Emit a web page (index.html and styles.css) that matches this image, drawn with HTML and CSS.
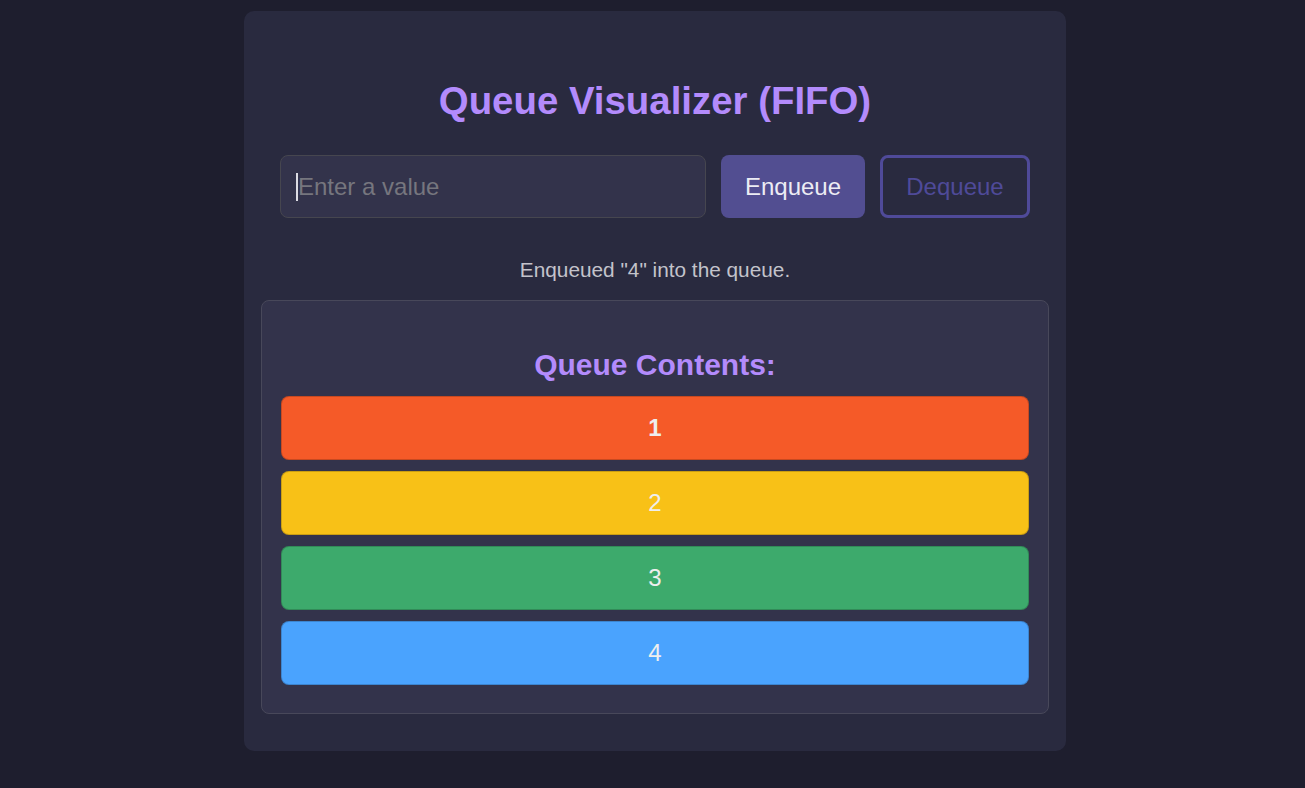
FILE: index.html
```html
<!DOCTYPE html>
<html lang="en">
<head>
<meta charset="utf-8">
<title>Queue Visualizer (FIFO)</title>
<link rel="stylesheet" href="styles.css">
</head>
<body>
<main class="card">
  <h1 class="title">Queue Visualizer (FIFO)</h1>
  <div class="controls">
    <div class="input-wrap">
      <input class="value-input" type="text" placeholder="Enter a value">
    </div>
    <button class="btn btn-enqueue">Enqueue</button>
    <button class="btn btn-dequeue">Dequeue</button>
  </div>
  <p class="message">Enqueued "4" into the queue.</p>
  <section class="queue-box">
    <h2 class="queue-title">Queue Contents:</h2>
    <div class="queue-list">
      <div class="item item-orange item-front">1</div>
      <div class="item item-yellow">2</div>
      <div class="item item-green">3</div>
      <div class="item item-blue">4</div>
    </div>
  </section>
</main>
</body>
</html>
```

FILE: styles.css
```css
* { box-sizing: border-box; }

html, body {
  margin: 0;
  background: #1e1e2e;
  font-family: "Liberation Sans", Arial, sans-serif;
}

body {
  padding: 11px 0 0 5px;
}

.card {
  width: 822px;
  margin: 0 auto;
  background: #292a3f;
  border-radius: 10px;
  padding: 17px 17px 37px;
  display: flex;
  flex-direction: column;
}

.title {
  margin: 50px 0 0;
  text-align: center;
  font-size: 38.4px;
  line-height: 46px;
  font-weight: bold;
  color: #b38bfc;
}

.controls {
  display: flex;
  gap: 15px;
  margin: 31px 19px 0;
  height: 63px;
}

.input-wrap {
  position: relative;
  flex: 1;
  min-width: 0;
  display: flex;
}

.input-wrap::after {
  content: "";
  position: absolute;
  left: 16px;
  top: 18px;
  width: 2px;
  height: 28px;
  background: #dcdce4;
}

.value-input {
  flex: 1;
  min-width: 0;
  height: 63px;
  padding: 0 16px 0 17px;
  background: #33334b;
  border: 1px solid #46464f;
  border-radius: 8px;
  font-family: inherit;
  font-size: 24px;
  color: #e8e8f0;
  outline: none;
}

.value-input::placeholder {
  color: #76767e;
}

.btn {
  height: 63px;
  border-radius: 8px;
  font-family: inherit;
  font-size: 24px;
  cursor: pointer;
}

.btn-enqueue {
  width: 144px;
  padding: 0;
  background: #524e91;
  border: none;
  color: #ececf4;
}

.btn-dequeue {
  width: 150px;
  padding: 0;
  background: transparent;
  border: 3px solid #4f4a99;
  color: #4f4a99;
}

.message {
  margin: 40px 0 0;
  text-align: center;
  font-size: 20.8px;
  line-height: 24px;
  color: #c3c3cb;
}

.queue-box {
  margin-top: 18px;
  background: #33334b;
  border: 1px solid #48485a;
  border-radius: 8px;
  padding: 47px 19px 28px;
}

.queue-title {
  margin: 0;
  text-align: center;
  font-size: 30px;
  line-height: 34px;
  font-weight: bold;
  color: #b38bfc;
}

.queue-list {
  margin-top: 14px;
  display: flex;
  flex-direction: column;
  gap: 11px;
}

.item {
  height: 64px;
  border-radius: 8px;
  border: 1px solid rgba(0, 0, 0, 0.18);
  display: flex;
  align-items: center;
  justify-content: center;
  font-size: 24px;
  color: #eeeeee;
}

.item-front { font-weight: bold; }

.item-orange { background: #f55a28; }
.item-yellow { background: #f8c117; }
.item-green  { background: #3daa6c; }
.item-blue   { background: #4aa3fe; }
```
